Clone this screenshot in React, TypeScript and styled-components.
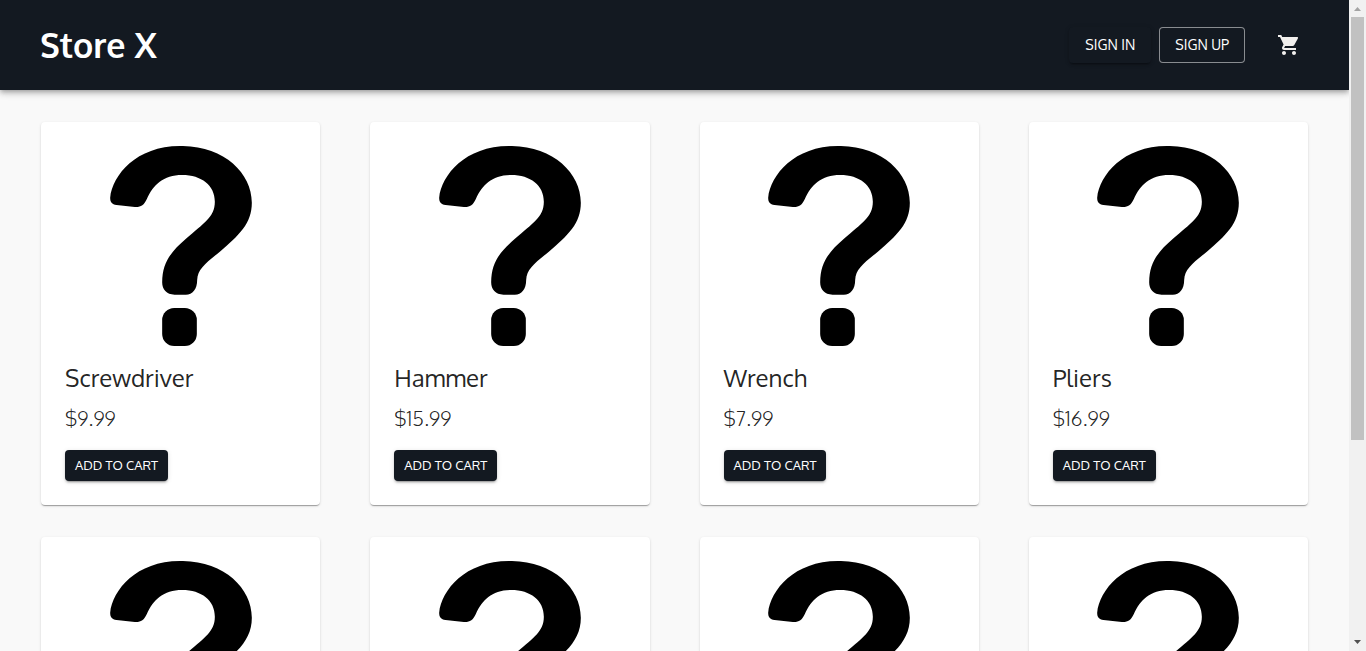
import React from "react";
import styled, { createGlobalStyle } from "styled-components";
import { MdShoppingCart } from "react-icons/md";

const navy = "#131921";

const GlobalStyle = createGlobalStyle`
  *, *::before, *::after { box-sizing: border-box; }
  body {
    margin: 0;
    background: #f9f9f9;
    color: rgba(0, 0, 0, 0.87);
    font-family: Oxygen, "Noto Sans", sans-serif;
  }
`;

const Shell = styled.div`
  display: flex;
  height: 100vh;
`;

const Page = styled.div`
  flex: 1;
  min-width: 0;
  overflow-y: auto;
  scrollbar-width: none;
`;

const Header = styled.header`
  display: flex;
  align-items: center;
  justify-content: space-between;
  height: 90px;
  padding: 0 40px;
  background: ${navy};
  color: #fff;
  box-shadow: 0 2px 4px -1px rgba(0, 0, 0, 0.2), 0 4px 5px rgba(0, 0, 0, 0.14),
    0 1px 10px rgba(0, 0, 0, 0.12);
`;

const Brand = styled.h1`
  margin: 0;
  font-size: 34px;
  font-weight: 600;
  line-height: 48px;
`;

const Nav = styled.nav`
  display: flex;
  align-items: center;
  gap: 8px;
`;

const raised = `0 3px 1px -2px rgba(0, 0, 0, 0.2), 0 2px 2px rgba(0, 0, 0, 0.14),
  0 1px 5px rgba(0, 0, 0, 0.12)`;

const NavButton = styled.button<{ $outlined?: boolean }>`
  height: 36px;
  padding: 0 15px;
  border: 1px solid ${(p) => (p.$outlined ? "rgba(255, 255, 255, 0.5)" : "transparent")};
  border-radius: 4px;
  background: ${navy};
  box-shadow: ${(p) => (p.$outlined ? "none" : raised)};
  color: #fff;
  font: 400 14px/24px Oxygen, "Noto Sans", sans-serif;
  cursor: pointer;
`;

const CartButton = styled.button`
  display: flex;
  margin-left: 16px;
  padding: 8px;
  border: 0;
  background: none;
  color: #f2f0ee;
  cursor: pointer;
`;

const Products = styled.main`
  display: grid;
  grid-template-columns: repeat(4, minmax(0, 1fr));
  gap: 32px 50px;
  padding: 32px 41px;
`;

const Card = styled.article`
  display: flex;
  flex-direction: column;
  align-items: flex-start;
  padding: 24px;
  border-radius: 4px;
  background: #fff;
  box-shadow: 0 2px 1px -1px rgba(0, 0, 0, 0.2), 0 1px 1px rgba(0, 0, 0, 0.14),
    0 1px 3px rgba(0, 0, 0, 0.12);
`;

const Picture = styled.svg`
  display: block;
  align-self: center;
  width: 142px;
  height: 200px;
`;

const Name = styled.h2`
  margin: 16px 0 8px;
  font-size: 24px;
  font-weight: 400;
  line-height: 32px;
`;

const Price = styled.p`
  margin: 0 0 16px;
  font-size: 20px;
  font-weight: 300;
  line-height: 32px;
`;

const AddButton = styled.button`
  padding: 4px 10px 5px;
  border: 0;
  border-radius: 4px;
  background: ${navy};
  box-shadow: ${raised};
  color: #fff;
  font: 400 13px/22px Oxygen, "Noto Sans", sans-serif;
  cursor: pointer;
`;

const ScrollTrack = styled.div`
  display: flex;
  flex-direction: column;
  align-items: center;
  width: 17px;
  background: #f1f1f1;
`;

const ScrollThumb = styled.div`
  width: 13px;
  height: 65%;
  margin-bottom: auto;
  background: #c1c1c1;
`;

const Arrow = styled.svg`
  display: block;
  flex: none;
  width: 17px;
  height: 17px;
`;

const products = [
  { name: "Screwdriver", price: "$9.99" },
  { name: "Hammer", price: "$15.99" },
  { name: "Wrench", price: "$7.99" },
  { name: "Pliers", price: "$16.99" },
  { name: "Saw", price: "$12.99" },
  { name: "Drill", price: "$49.99" },
  { name: "Level", price: "$8.99" },
  { name: "Chisel", price: "$6.99" },
];

const Placeholder = () => (
  <Picture viewBox="91 78 425 600" role="img" aria-label="No picture">
    <path d="M300 78C430 76 516 158 516 248C516 310 478 345 420 395C375 432 354 447 352 480C352 508 338 524 318 524H284C260 524 247 508 247 487C248 430 268 400 320 355C370 310 405 292 405 245C405 196 365 165 307 165C250 165 220 195 201 237C192 256 183 262 165 261L110 255C96 253 91 246 91 233C98 165 170 78 300 78Z" />
    <rect x="247" y="564" width="104" height="114" rx="36" />
  </Picture>
);

export default function App() {
  return (
    <>
      <GlobalStyle />
      <Shell>
        <Page>
          <Header>
            <Brand>Store X</Brand>
            <Nav>
              <NavButton>SIGN IN</NavButton>
              <NavButton $outlined>SIGN UP</NavButton>
              <CartButton aria-label="Cart">
                <MdShoppingCart size={24} />
              </CartButton>
            </Nav>
          </Header>
          <Products>
            {products.map((p) => (
              <Card key={p.name}>
                <Placeholder />
                <Name>{p.name}</Name>
                <Price>{p.price}</Price>
                <AddButton>ADD TO CART</AddButton>
              </Card>
            ))}
          </Products>
        </Page>
        <ScrollTrack aria-hidden="true">
          <Arrow viewBox="0 0 17 17">
            <path d="M5 11L8.500 7L12 11Z" fill="#a3a3a3" />
          </Arrow>
          <ScrollThumb />
          <Arrow viewBox="0 0 17 17">
            <path d="M5 6L8.500 10L12 6Z" fill="#505050" />
          </Arrow>
        </ScrollTrack>
      </Shell>
    </>
  );
}
